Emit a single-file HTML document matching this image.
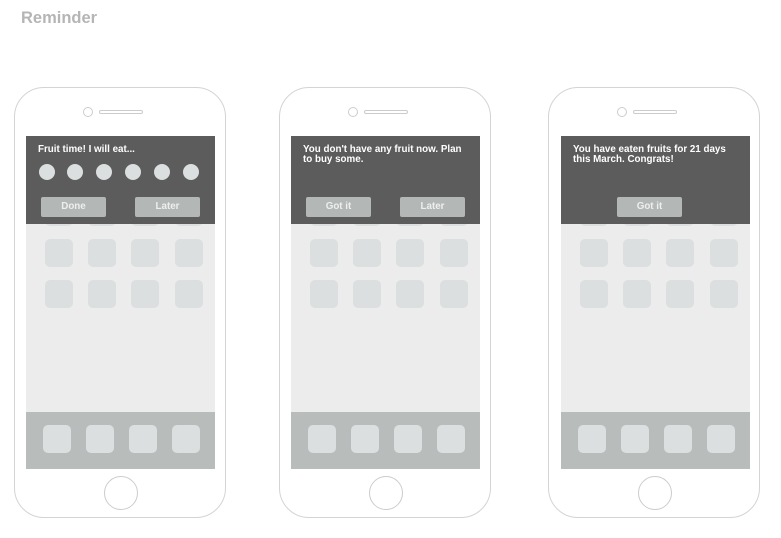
<!DOCTYPE html>
<html><head><style>
*{margin:0;padding:0;box-sizing:border-box}
body{width:781px;height:538px;background:#fff;position:relative;overflow:hidden;font-family:"Liberation Sans",sans-serif}
.t{position:absolute;left:21px;top:9px;font-size:16.5px;font-weight:bold;color:#b5b5b5}
.ph{position:absolute;top:87px;width:212px;height:431px;border:1px solid #d4d4d4;border-radius:30px}
.cam{position:absolute;left:68px;top:19px;width:10px;height:10px;border:1px solid #ccc;border-radius:50%}
.sp{position:absolute;left:84px;top:22px;width:44px;height:4px;border:1px solid #ccc;border-radius:3px}
.sc{position:absolute;left:11px;top:48px;width:189px;height:333px;background:#ececec;overflow:hidden}
.ic{position:absolute;width:28px;height:28px;background:#dcdfdf;border-radius:5px}
.dock{position:absolute;left:0;top:276px;width:189px;height:57px;background:#b8bcbb}
.ban{position:absolute;left:0;top:0;width:189px;height:88px;background:#5c5c5c;color:#fff;font-size:9.8px;font-weight:bold;line-height:10px;padding:9px 12px}
.btn{position:absolute;top:61px;width:65px;height:20px;background:#b3b8b7;border-radius:2px;color:#eee;font-size:9.8px;font-weight:bold;text-align:center;line-height:20px}
.dot{position:absolute;top:28px;width:16px;height:16px;border-radius:50%;background:#dcdfdf}
.hb{position:absolute;left:89px;top:388px;width:34px;height:34px;border:1px solid #ccc;border-radius:50%}
</style></head><body>
<div class="t">Reminder</div>

<div class="ph" style="left:14px">
<div class="cam"></div><div class="sp"></div>
<div class="sc">
<div class="ic" style="left:19px;top:62px"></div><div class="ic" style="left:62px;top:62px"></div><div class="ic" style="left:105px;top:62px"></div><div class="ic" style="left:149px;top:62px"></div>
<div class="ic" style="left:19px;top:103px"></div><div class="ic" style="left:62px;top:103px"></div><div class="ic" style="left:105px;top:103px"></div><div class="ic" style="left:149px;top:103px"></div>
<div class="ic" style="left:19px;top:144px"></div><div class="ic" style="left:62px;top:144px"></div><div class="ic" style="left:105px;top:144px"></div><div class="ic" style="left:149px;top:144px"></div>
<div class="dock"><div class="ic" style="left:17px;top:13px"></div><div class="ic" style="left:60px;top:13px"></div><div class="ic" style="left:103px;top:13px"></div><div class="ic" style="left:146px;top:13px"></div></div>
<div class="ban">Fruit time! I will eat...
<div class="dot" style="left:13px"></div><div class="dot" style="left:41px"></div><div class="dot" style="left:70px"></div><div class="dot" style="left:99px"></div><div class="dot" style="left:128px"></div><div class="dot" style="left:157px"></div>
<div class="btn" style="left:15px">Done</div><div class="btn" style="left:109px">Later</div></div>
</div>
<div class="hb"></div>
</div>

<div class="ph" style="left:279px">
<div class="cam"></div><div class="sp"></div>
<div class="sc">
<div class="ic" style="left:19px;top:62px"></div><div class="ic" style="left:62px;top:62px"></div><div class="ic" style="left:105px;top:62px"></div><div class="ic" style="left:149px;top:62px"></div>
<div class="ic" style="left:19px;top:103px"></div><div class="ic" style="left:62px;top:103px"></div><div class="ic" style="left:105px;top:103px"></div><div class="ic" style="left:149px;top:103px"></div>
<div class="ic" style="left:19px;top:144px"></div><div class="ic" style="left:62px;top:144px"></div><div class="ic" style="left:105px;top:144px"></div><div class="ic" style="left:149px;top:144px"></div>
<div class="dock"><div class="ic" style="left:17px;top:13px"></div><div class="ic" style="left:60px;top:13px"></div><div class="ic" style="left:103px;top:13px"></div><div class="ic" style="left:146px;top:13px"></div></div>
<div class="ban">You don't have any fruit now. Plan to buy some.
<div class="btn" style="left:15px">Got it</div><div class="btn" style="left:109px">Later</div></div>
</div>
<div class="hb"></div>
</div>

<div class="ph" style="left:548px">
<div class="cam"></div><div class="sp"></div>
<div class="sc" style="left:12px">
<div class="ic" style="left:19px;top:62px"></div><div class="ic" style="left:62px;top:62px"></div><div class="ic" style="left:105px;top:62px"></div><div class="ic" style="left:149px;top:62px"></div>
<div class="ic" style="left:19px;top:103px"></div><div class="ic" style="left:62px;top:103px"></div><div class="ic" style="left:105px;top:103px"></div><div class="ic" style="left:149px;top:103px"></div>
<div class="ic" style="left:19px;top:144px"></div><div class="ic" style="left:62px;top:144px"></div><div class="ic" style="left:105px;top:144px"></div><div class="ic" style="left:149px;top:144px"></div>
<div class="dock"><div class="ic" style="left:17px;top:13px"></div><div class="ic" style="left:60px;top:13px"></div><div class="ic" style="left:103px;top:13px"></div><div class="ic" style="left:146px;top:13px"></div></div>
<div class="ban">You have eaten fruits for 21 days this March. Congrats!
<div class="btn" style="left:56px">Got it</div></div>
</div>
<div class="hb"></div>
</div>
</body></html>
